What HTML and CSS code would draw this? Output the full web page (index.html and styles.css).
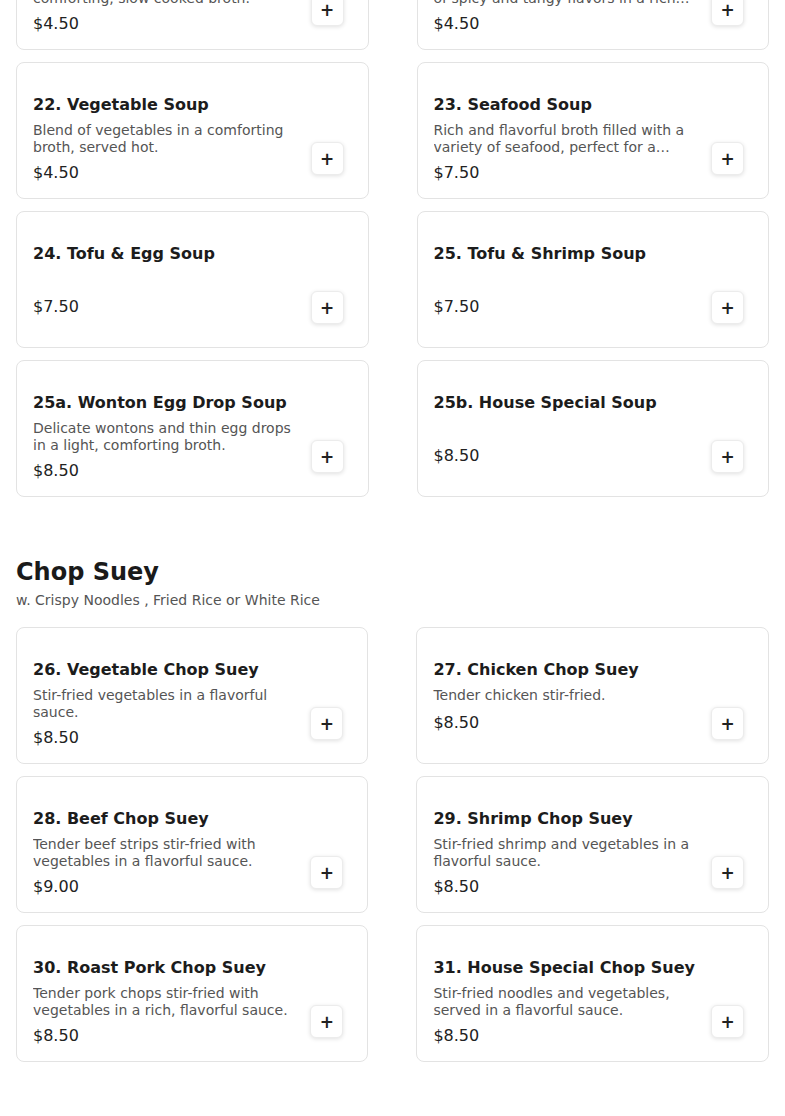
FILE: index.html
```html
<!DOCTYPE html>
<html lang="en">
<head>
<meta charset="utf-8">
<title>Menu</title>
<link rel="stylesheet" href="styles.css">
</head>
<body>
<main class="menu">
  <section class="section section-soups">
    <div class="grid">
      <article class="card">
        <div class="info">
          <h3 class="name">20. Wonton Soup</h3>
          <p class="desc">Delicate wontons served in a comforting, slow cooked broth.</p>
          <div class="price">$4.50</div>
        </div>
        <button class="add" aria-label="Add">+</button>
      </article>
      <article class="card">
        <div class="info">
          <h3 class="name">21. Hot &amp; Sour Soup</h3>
          <p class="desc">A tantalizing combination<br>of spicy and tangy flavors in a rich broth with tofu and mushrooms.</p>
          <div class="price">$4.50</div>
        </div>
        <button class="add" aria-label="Add">+</button>
      </article>
      <article class="card">
        <div class="info">
          <h3 class="name">22. Vegetable Soup</h3>
          <p class="desc">Blend of vegetables in a comforting broth, served hot.</p>
          <div class="price">$4.50</div>
        </div>
        <button class="add" aria-label="Add">+</button>
      </article>
      <article class="card">
        <div class="info">
          <h3 class="name">23. Seafood Soup</h3>
          <p class="desc">Rich and flavorful broth filled with a variety of seafood, perfect for a hearty meal.</p>
          <div class="price">$7.50</div>
        </div>
        <button class="add" aria-label="Add">+</button>
      </article>
      <article class="card">
        <div class="info">
          <h3 class="name">24. Tofu &amp; Egg Soup</h3>
          <p class="desc"></p>
          <div class="price">$7.50</div>
        </div>
        <button class="add" aria-label="Add">+</button>
      </article>
      <article class="card">
        <div class="info">
          <h3 class="name">25. Tofu &amp; Shrimp Soup</h3>
          <p class="desc"></p>
          <div class="price">$7.50</div>
        </div>
        <button class="add" aria-label="Add">+</button>
      </article>
      <article class="card">
        <div class="info">
          <h3 class="name">25a. Wonton Egg Drop Soup</h3>
          <p class="desc">Delicate wontons and thin egg drops in a light, comforting broth.</p>
          <div class="price">$8.50</div>
        </div>
        <button class="add" aria-label="Add">+</button>
      </article>
      <article class="card">
        <div class="info">
          <h3 class="name">25b. House Special Soup</h3>
          <p class="desc"></p>
          <div class="price">$8.50</div>
        </div>
        <button class="add" aria-label="Add">+</button>
      </article>
    </div>
  </section>

  <section class="section">
    <header class="section-head">
      <h2 class="section-title">Chop Suey</h2>
      <p class="section-sub">w. Crispy Noodles , Fried Rice or White Rice</p>
    </header>
    <div class="grid">
      <article class="card">
        <div class="info">
          <h3 class="name">26. Vegetable Chop Suey</h3>
          <p class="desc">Stir-fried vegetables in a flavorful sauce.</p>
          <div class="price">$8.50</div>
        </div>
        <button class="add" aria-label="Add">+</button>
      </article>
      <article class="card">
        <div class="info">
          <h3 class="name">27. Chicken Chop Suey</h3>
          <p class="desc">Tender chicken stir-fried.</p>
          <div class="price">$8.50</div>
        </div>
        <button class="add" aria-label="Add">+</button>
      </article>
      <article class="card">
        <div class="info">
          <h3 class="name">28. Beef Chop Suey</h3>
          <p class="desc">Tender beef strips stir-fried with vegetables in a flavorful sauce.</p>
          <div class="price">$9.00</div>
        </div>
        <button class="add" aria-label="Add">+</button>
      </article>
      <article class="card">
        <div class="info">
          <h3 class="name">29. Shrimp Chop Suey</h3>
          <p class="desc">Stir-fried shrimp and vegetables in a flavorful sauce.</p>
          <div class="price">$8.50</div>
        </div>
        <button class="add" aria-label="Add">+</button>
      </article>
      <article class="card">
        <div class="info">
          <h3 class="name">30. Roast Pork Chop Suey</h3>
          <p class="desc">Tender pork chops stir-fried with vegetables in a rich, flavorful sauce.</p>
          <div class="price">$8.50</div>
        </div>
        <button class="add" aria-label="Add">+</button>
      </article>
      <article class="card">
        <div class="info">
          <h3 class="name">31. House Special Chop Suey</h3>
          <p class="desc">Stir-fried noodles and vegetables, served in a flavorful sauce.</p>
          <div class="price">$8.50</div>
        </div>
        <button class="add" aria-label="Add">+</button>
      </article>
    </div>
  </section>
</main>
</body>
</html>
```

FILE: styles.css
```css
* { box-sizing: border-box; }

html, body {
  margin: 0;
  padding: 0;
  background: #ffffff;
}

body {
  font-family: "DejaVu Sans", "Liberation Sans", sans-serif;
  color: #1a1a1a;
  overflow: hidden;
}

.menu {
  padding: 0 16px;
  margin-top: -87px;
}

.section + .section {
  margin-top: 59px;
}

.section-head {
  margin-bottom: 17px;
}

.section-title {
  margin: 0;
  font-size: 24px;
  line-height: 32px;
  font-weight: 700;
  color: #1a1a1a;
}

.section-sub {
  margin: 2px 0 0;
  font-size: 14px;
  line-height: 20px;
  color: #555555;
}

.grid {
  display: grid;
  grid-template-columns: 1fr 1fr;
  column-gap: 48px;
  row-gap: 12px;
}

.card {
  display: flex;
  align-items: flex-end;
  gap: 16px;
  height: 137px;
  padding: 30px 24px 23px 16px;
  border: 1px solid #e3e3e3;
  border-radius: 8px;
  background: #ffffff;
}

.info {
  flex: 1;
  min-width: 0;
  align-self: flex-start;
}

.name {
  margin: 0;
  font-size: 16px;
  line-height: 24px;
  font-weight: 700;
  color: #1c1c1c;
  white-space: nowrap;
}

.desc {
  margin: 5px 0 0;
  min-height: 19px;
  font-size: 14px;
  line-height: 17px;
  color: #555555;
  display: -webkit-box;
  -webkit-box-orient: vertical;
  -webkit-line-clamp: 2;
  overflow: hidden;
}

.price {
  margin-top: 5px;
  font-size: 16px;
  line-height: 24px;
  color: #222222;
}

.add {
  flex: none;
  width: 33px;
  height: 33px;
  padding: 0;
  border: 1px solid #ececec;
  border-radius: 6px;
  background: #ffffff;
  box-shadow: 0 1px 4px rgba(0, 0, 0, 0.12);
  font-family: "DejaVu Sans", sans-serif;
  font-size: 17px;
  font-weight: 700;
  line-height: 30px;
  color: #222222;
  cursor: pointer;
}
```
